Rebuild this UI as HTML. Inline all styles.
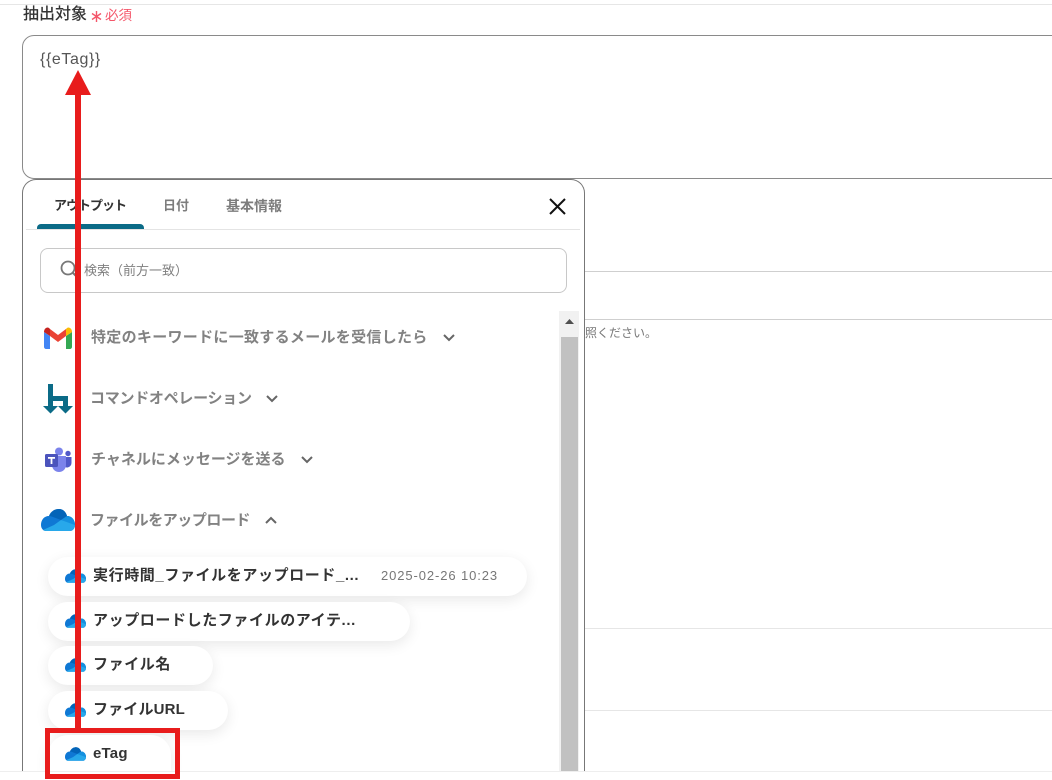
<!DOCTYPE html>
<html lang="ja"><head><meta charset="utf-8"><style>
html,body{margin:0;padding:0;background:#fff;width:1052px;height:780px;overflow:hidden}
#root{position:absolute;left:0;top:0;width:1052px;height:780px;overflow:hidden;font-family:"Liberation Sans","Noto Sans CJK JP",sans-serif;color:#333;background:#fff}
#root div,#root span,#root svg{position:absolute;white-space:nowrap}
.hl{left:585px;right:0;height:1px}
.sec{font-size:15px;font-weight:700;color:#828282;line-height:20px}
.chip{left:48px;height:39px;border-radius:20px;background:#fff;box-shadow:0 4px 14px rgba(0,0,0,.09)}
.chip b{position:absolute;left:45px;top:9px;font-size:15px;line-height:20px;font-weight:700;color:#333;white-space:nowrap}
.tab{top:197px;font-size:14px;line-height:18px;font-weight:700;color:#7d7d7d}
</style></head><body>
<div id="root">
<svg width="0" height="0" style="left:0;top:0"><defs>
<symbol id="od" viewBox="0 0 34 22">
<path d="M5 22C2 22 0 19 0 16 0 11 3 7 8 7 10 2 14 0 18 0c4 0 7 3 8 7 5 0 8 4 8 9 0 3-2 6-5 6z" fill="#0f78d4"/>
<path d="M8 7C10 2 14 0 18 0c4 0 7 3 8 7l-6 4-8-3c-1.500-.6-3-1-4-1z" fill="#0364b8"/>
<path d="M20 11l6-4c5 0 8 4 8 9L24 13z" fill="#1490df"/>
<path d="M2 21l11-5 7-5 14 5c0 3-2 6-5 6H5c-1 0-2-.4-3-1z" fill="#28a8ea"/>
</symbol></defs></svg>

<div style="left:0;right:0;top:4px;height:1px;background:#e6e6e6"></div>
<div style="left:23px;top:5px;font-size:16px;line-height:20px;font-weight:500;color:#333">抽出対象</div>
<svg style="left:91px;top:11px" width="11" height="11" viewBox="0 0 11 11"><path d="M5.500 0v11M1 2.500l9 6M10 2.500l-9 6" stroke="#f4566a" stroke-width="1.400" fill="none"/></svg>
<div style="left:105px;top:7px;font-size:13.500px;line-height:18px;color:#f4566a">必須</div>

<div style="left:22px;top:35px;width:1100px;height:142px;border:1px solid #8a8a8a;border-radius:12px;background:#fff"></div>
<div style="left:40px;top:50px;font-size:16px;letter-spacing:.6px;line-height:20px;color:#555">{{eTag}}</div>

<div class="hl" style="top:271px;background:#cfcfcf"></div>
<div class="hl" style="top:319px;background:#cfcfcf"></div>
<div class="hl" style="top:628px;background:#e6e6e6"></div>
<div class="hl" style="top:710px;background:#e6e6e6"></div>
<div style="left:585px;top:325px;font-size:12px;line-height:17px;color:#777">照ください。</div>

<div style="left:22px;top:179px;width:561px;height:592px;border:1px solid #777;border-bottom:0;border-radius:14px 14px 0 0;background:#fff"></div>

<div class="tab" style="left:54px;color:#333;font-size:13px;letter-spacing:-1px">アウトプット</div>
<div class="tab" style="left:163px;font-size:13px">日付</div>
<div class="tab" style="left:226px">基本情報</div>
<div style="left:26px;top:229px;width:554px;height:1px;background:#e4e4e4"></div>
<div style="left:37px;top:224px;width:107px;height:5px;background:#0b6b87;border-radius:4px 4px 0 0"></div>
<svg style="left:548px;top:198px" width="19" height="18" viewBox="0 0 19 18"><path d="M2 1l15 15M17 1L2 16" stroke="#111" stroke-width="2" fill="none"/></svg>

<div style="left:40px;top:248px;width:525px;height:43px;border:1px solid #c8c8c8;border-radius:8px"></div>
<svg style="left:60px;top:260px" width="20" height="20" viewBox="0 0 20 20"><circle cx="8" cy="8" r="6.500" stroke="#777" stroke-width="1.800" fill="none"/><path d="M13 13l5 5" stroke="#777" stroke-width="2"/></svg>
<div style="left:84px;top:262px;font-size:13px;line-height:18px;color:#808080">検索（前方一致）</div>

<div style="left:559px;top:311px;width:20px;height:460px;background:#f1f1f1"></div>
<div style="left:561px;top:337px;width:17px;height:434px;background:#c1c1c1"></div>
<svg style="left:564px;top:318px" width="11" height="7"><path d="M5.500 1L10 6H1z" fill="#505050"/></svg>

<svg style="left:44px;top:327px" width="28" height="22" viewBox="0 0 28 22">
<path d="M0 5v15c0 1 1 2 2 2h4V9z" fill="#4285f4"/>
<path d="M28 5v15c0 1-1 2-2 2h-4V9z" fill="#34a853"/>
<path d="M22 2l1-1c2-1.500 5 .5 5 4l-6 4z" fill="#fbbc04"/>
<path d="M6 9l8 6 8-6V2l-8 6-8-6z" fill="#ea4335"/>
<path d="M0 5c0-3.500 3-5.500 5-4l1 1v7z" fill="#c5221f"/>
</svg>
<div class="sec" style="left:91px;top:328px;letter-spacing:.3px">特定のキーワードに一致するメールを受信したら</div>
<svg style="left:442px;top:333px" width="14" height="10"><path d="M2 2l5 5 5-5" stroke="#666" stroke-width="2" fill="none"/></svg>

<svg style="left:43px;top:384px" width="30" height="30" viewBox="0 0 30 30">
<path d="M5 0h5v12h15v11h-5v-6H10v6H5z" fill="#0b6b87"/>
<path d="M0 22h15l-7.500 7.500zM15 22h15l-7.500 7.500z" fill="#0b6b87"/>
</svg>
<div class="sec" style="left:90px;top:389px;letter-spacing:-.27px">コマンドオペレーション</div>
<svg style="left:265px;top:394px" width="14" height="10"><path d="M2 2l5 5 5-5" stroke="#666" stroke-width="2" fill="none"/></svg>

<svg style="left:44px;top:447px" width="28" height="25" viewBox="0 0 28 25">
<circle cx="24" cy="6.500" r="2.700" fill="#5059c9"/><path d="M19 10h8.500v6a4.500 4.500 0 0 1-8.500 2z" fill="#5059c9"/>
<circle cx="15" cy="4.500" r="4" fill="#7b83eb"/><path d="M8 9h14v9a7 7 0 0 1-14 0z" fill="#7b83eb"/>
<rect x="1" y="7" width="13" height="13" rx="1.500" fill="#4b53bc"/>
<path d="M4 10h7v1.800H8.400V17H6.600v-5.200H4z" fill="#fff"/>
</svg>
<div class="sec" style="left:91px;top:450px">チャネルにメッセージを送る</div>
<svg style="left:300px;top:455px" width="14" height="10"><path d="M2 2l5 5 5-5" stroke="#666" stroke-width="2" fill="none"/></svg>

<svg style="left:41px;top:509px" width="34" height="22"><use href="#od"/></svg>
<div class="sec" style="left:90px;top:511px;letter-spacing:-.45px">ファイルをアップロード</div>
<svg style="left:264px;top:515px" width="14" height="10"><path d="M2 8l5-5 5 5" stroke="#666" stroke-width="2" fill="none"/></svg>

<div class="chip" style="top:557px;width:479px"><svg style="left:17px;top:12px" width="21" height="14"><use href="#od"/></svg><b style="letter-spacing:.6px">実行時間_ファイルをアップロード_...</b><span style="left:333px;top:10px;font-size:13px;letter-spacing:.9px;line-height:18px;color:#777">2025-02-26 10:23</span></div>
<div class="chip" style="top:602px;width:362px"><svg style="left:17px;top:12px" width="21" height="14"><use href="#od"/></svg><b style="letter-spacing:.6px">アップロードしたファイルのアイテ...</b></div>
<div class="chip" style="top:646px;width:165px"><svg style="left:17px;top:12px" width="21" height="14"><use href="#od"/></svg><b style="letter-spacing:.6px">ファイル名</b></div>
<div class="chip" style="top:691px;width:180px"><svg style="left:17px;top:12px" width="21" height="14"><use href="#od"/></svg><b style="letter-spacing:.15px">ファイルURL</b></div>
<div class="chip" style="top:735px;width:123px;height:36px;border-radius:20px 20px 0 0"><svg style="left:17px;top:12px" width="21" height="14"><use href="#od"/></svg><b style="letter-spacing:.2px">eTag</b></div>

<div style="left:0;top:771px;width:1052px;height:9px;background:#fff;border-top:1px solid #eee;box-sizing:border-box"></div>

<div style="left:75px;top:94px;width:6px;height:636px;background:#e81c1c"></div>
<svg style="left:65px;top:70px" width="26" height="26"><path d="M13 0L26 25H0z" fill="#e81c1c"/></svg>
<div style="left:45px;top:728px;width:125px;height:41px;border:5px solid #e81c1c"></div>
</div>
</body></html>
